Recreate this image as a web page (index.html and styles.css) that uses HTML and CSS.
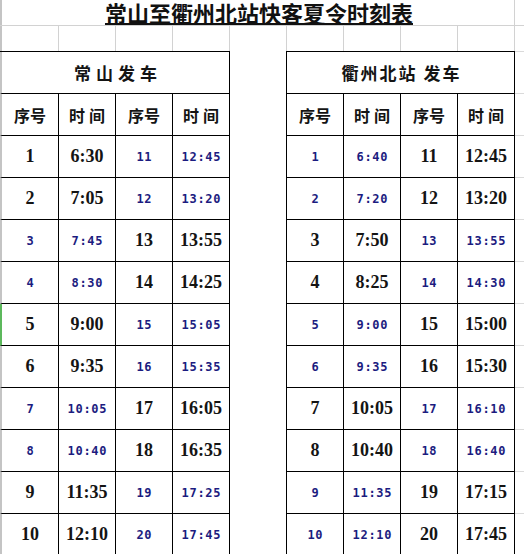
FILE: index.html
```html
<!DOCTYPE html>
<html lang="zh-CN">
<head>
<meta charset="utf-8">
<title>常山至衢州北站快客夏令时刻表</title>
<link rel="stylesheet" href="styles.css">
</head>
<body>
<div class="sheet">
  <div class="title-row">
    <div class="title-cell"><span class="title">常山至衢州北站快客夏令时刻表</span></div>
    <div class="fill"></div>
  </div>
  <div class="blank-row">
    <div class="bc first"></div><div class="bc"></div><div class="bc"></div><div class="bc"></div><div class="bc"></div><div class="bc"></div><div class="bc"></div><div class="bc"></div><div class="bc"></div>
    <div class="fill"></div>
  </div>
  <div class="tables">
    <div class="grid left">
      <div class="c head first">常山发车</div>
      <div class="c sub first">序号</div><div class="c sub sp">时间</div><div class="c sub">序号</div><div class="c sub sp">时间</div>

      <div class="c first k">1</div><div class="c k">6:30</div><div class="c b">11</div><div class="c b">12:45</div>
      <div class="c first k">2</div><div class="c k">7:05</div><div class="c b">12</div><div class="c b">13:20</div>
      <div class="c first b">3</div><div class="c b">7:45</div><div class="c k">13</div><div class="c k">13:55</div>
      <div class="c first b">4</div><div class="c b">8:30</div><div class="c k">14</div><div class="c k">14:25</div>
      <div class="c first sel k">5</div><div class="c k">9:00</div><div class="c b">15</div><div class="c b">15:05</div>
      <div class="c first k">6</div><div class="c k">9:35</div><div class="c b">16</div><div class="c b">15:35</div>
      <div class="c first b">7</div><div class="c b">10:05</div><div class="c k">17</div><div class="c k">16:05</div>
      <div class="c first b">8</div><div class="c b">10:40</div><div class="c k">18</div><div class="c k">16:35</div>
      <div class="c first k">9</div><div class="c k">11:35</div><div class="c b">19</div><div class="c b">17:25</div>
      <div class="c first k">10</div><div class="c k">12:10</div><div class="c b">20</div><div class="c b">17:45</div>
    </div>
    <div class="gap"></div>
    <div class="grid right">
      <div class="c head">衢州北站 发车</div>
      <div class="c sub">序号</div><div class="c sub sp">时间</div><div class="c sub">序号</div><div class="c sub sp">时间</div>

      <div class="c b">1</div><div class="c b">6:40</div><div class="c k">11</div><div class="c k">12:45</div>
      <div class="c b">2</div><div class="c b">7:20</div><div class="c k">12</div><div class="c k">13:20</div>
      <div class="c k">3</div><div class="c k">7:50</div><div class="c b">13</div><div class="c b">13:55</div>
      <div class="c k">4</div><div class="c k">8:25</div><div class="c b">14</div><div class="c b">14:30</div>
      <div class="c b">5</div><div class="c b">9:00</div><div class="c k">15</div><div class="c k">15:00</div>
      <div class="c b">6</div><div class="c b">9:35</div><div class="c k">16</div><div class="c k">15:30</div>
      <div class="c k">7</div><div class="c k">10:05</div><div class="c b">17</div><div class="c b">16:10</div>
      <div class="c k">8</div><div class="c k">10:40</div><div class="c b">18</div><div class="c b">16:40</div>
      <div class="c b">9</div><div class="c b">11:35</div><div class="c k">19</div><div class="c k">17:15</div>
      <div class="c b">10</div><div class="c b">12:10</div><div class="c k">20</div><div class="c k">17:45</div>
    </div>
    <div class="rfill">
      <div class="rf"></div><div class="rf"></div><div class="rf"></div><div class="rf"></div><div class="rf"></div><div class="rf"></div><div class="rf"></div><div class="rf"></div><div class="rf"></div><div class="rf"></div><div class="rf"></div><div class="rf"></div>
    </div>
  </div>
</div>
</body>
</html>
```

FILE: styles.css
```css
* { box-sizing: border-box; }
html, body { margin: 0; padding: 0; background: #fff; }
.sheet {
  width: 524px;
  height: 554px;
  overflow: hidden;
  font-family: "Noto Sans CJK SC", sans-serif;
  color: #141414;
}
.title-row {
  display: flex;
  height: 26px;
  border-bottom: 1px solid #d2d2d2;
}
.title-cell {
  width: 515px;
  border-left: 2px solid #c4c4c4;
  border-right: 1px solid #d2d2d2;
  display: flex;
  justify-content: center;
  align-items: center;
}
.title {
  font-size: 22px;
  font-weight: 700;
  line-height: 25px;
  text-decoration: underline;
  text-decoration-thickness: 2px;
  text-underline-offset: 1px;
  color: #111;
  margin-left: 2px;
}
.fill { flex: 1; }
.blank-row {
  display: flex;
  height: 25px;
}
.bc {
  width: 57px;
  border-right: 1px solid #d2d2d2;
}
.bc.first {
  width: 59px;
  border-left: 2px solid #c4c4c4;
}
.tables {
  display: flex;
  align-items: flex-start;
}
.grid {
  display: grid;
  grid-auto-rows: 42px;
  border-top: 1px solid #000;
}
.grid.left { grid-template-columns: 59px 57px 57px 57px; }
.grid.right {
  grid-template-columns: 57px 57px 57px 57px;
  border-left: 1px solid #000;
}
.gap { width: 56px; }
.c {
  border-right: 1px solid #000;
  border-bottom: 1px solid #000;
  display: flex;
  align-items: center;
  justify-content: center;
  white-space: nowrap;
}
.c.first { border-left: 2px solid #c4c4c4; }
.c.first.sel { border-left-color: #5cb85c; }
.head {
  grid-column: 1 / span 4;
  font-size: 17px;
  font-weight: 700;
  letter-spacing: 5px;
  padding-left: 5px;
}
.grid.right .head { letter-spacing: 2px; padding-left: 2px; }
.sub {
  font-size: 16px;
  font-weight: 700;
}
.sub.sp { letter-spacing: 4px; padding-left: 4px; }
.k {
  font-family: "Liberation Serif", "Noto Sans CJK SC", serif;
  font-weight: 700;
  font-size: 18px;
  color: #141414;
}
.b {
  font-family: "DejaVu Sans Mono", "Noto Sans CJK SC", monospace;
  font-weight: 700;
  font-size: 12px;
  letter-spacing: 0.7px;
  padding-left: 0.7px;
  color: #1c1c80;
}
.rfill {
  flex: 1;
  border-top: 1px solid #dadada;
}
.rf {
  height: 42px;
  border-bottom: 1px solid #dadada;
}
```
